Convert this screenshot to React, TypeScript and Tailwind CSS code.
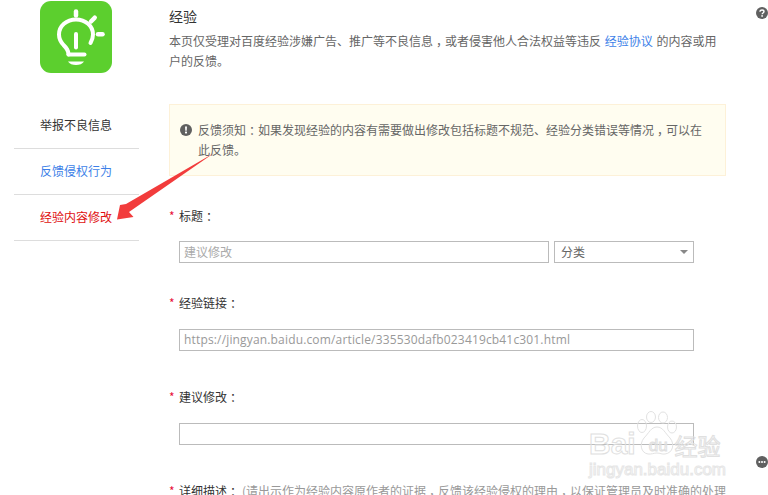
const font = "[font-family:'Noto_Sans_CJK_SC','Liberation_Sans',sans-serif]";

// full-width punctuation sits mid-cell in the reference, not at the left
function Punct({ char }: { char: string }) {
  return <span className="inline-block w-3 text-center [font-feature-settings:'halt']">{char}</span>;
}

function BulbLogo() {
  return (
    <div className="ml-[26px] mt-px h-[72px] w-[72px] rounded-[11px] bg-[#5ccf2e]">
      <svg width="72" height="72" viewBox="0 0 72 72" fill="none" stroke="#fff" strokeLinecap="round">
        <path d="M36 10.500v4" strokeWidth="4.500" />
        <path d="M51 20.500l3.700-3.800" strokeWidth="4.500" />
        <path d="M58 33.300h4.500" strokeWidth="4.500" />
        <path d="M36 33v13.500" strokeWidth="4" />
        <path
          d="M28.500 53.500c0-4.500-2-6.500-5-9.500-2.800-3-4.500-6.500-4.500-10.500 0-8.500 7.500-15 17-15s17 6.500 17 15c0 3-.8 5.500-2.500 8.500"
          strokeWidth="4"
        />
        <path d="M28.500 53.500h16" strokeWidth="4" />
        <path d="M28 60.500h16c-1.500 2.500-4.500 3.500-8 3.500s-6.500-1-8-3.500z" fill="#fff" stroke="none" />
      </svg>
    </div>
  );
}

function Sidebar() {
  const items = [
    { label: '举报不良信息', color: 'text-[#333333]' },
    { label: '反馈侵权行为', color: 'text-[#3d7fe8]' },
    { label: '经验内容修改', color: 'text-[#e01010]' },
  ];
  return (
    <aside className="ml-[14px] w-[125px] shrink-0">
      <BulbLogo />
      <ul className="mt-[30px]">
        {items.map((item) => (
          <li
            key={item.label}
            className={`flex h-[46px] items-center border-b border-[#dddddd] pb-[2px] pl-[26px] text-[12px] ${item.color}`}
          >
            {item.label}
          </li>
        ))}
      </ul>
    </aside>
  );
}

function FieldLabel({ text, hint, className }: { text: string; hint?: string; className: string }) {
  return (
    <div className={`flex h-5 items-center whitespace-nowrap text-[12px] text-[#333333] ${className}`}>
      <span className="w-[10px] text-[#e8103a]">*</span>
      <span>{text}<Punct char="：" /></span>
      {hint && (
        <span className="ml-[3px] text-[#999999]">
          (请出示作为经验内容原作者的证据<Punct char="，" />反馈该经验侵权的理由<Punct char="，" />{hint}
        </span>
      )}
    </div>
  );
}

function Notice() {
  return (
    <div className="mt-[33px] flex h-[72px] border border-[#fdf1d8] bg-[#fffdf0] pl-[10px] pr-[13px] pt-[15px] text-[12px] leading-5 text-[#666666]">
      <svg className="mt-1 h-3 w-3 shrink-0" viewBox="0 0 12 12">
        <circle cx="6" cy="6" r="6" fill="#606060" />
        <path d="M5 2.500h2l-.3 4.200H5.300z" fill="#fff" />
        <rect x="5" y="7.600" width="2" height="1.800" fill="#fff" />
      </svg>
      <p className="ml-[6px]">
        反馈须知<Punct char="：" />如果发现经验的内容有需要做出修改包括标题不规范、经验分类错误等情况<Punct char="，" />可以在此反馈。
      </p>
    </div>
  );
}

function Form() {
  return (
    <form>
      <FieldLabel text="标题" className="mt-[30px]" />
      <div className="ml-[10px] mt-[15px] flex gap-[5px]">
        <div className="flex h-[22px] w-[370px] items-center border border-[#bbbbbb] px-1 text-[12px] text-[#aaaaaa]">建议修改</div>
        <div className="flex h-[22px] w-[140px] items-center justify-between border border-[#bbbbbb] pl-[6px] pr-[4px] text-[12px] text-[#666666]">
          <span>分类</span>
          <span className="mr-px h-0 w-0 border-x-[4px] border-t-[4px] border-x-transparent border-t-[#888888]" />
        </div>
      </div>
      <FieldLabel text="经验链接" className="mt-[30px]" />
      <div className="ml-[10px] mt-4 flex h-[22px] w-[515px] items-center border border-[#bbbbbb] px-1 text-[12px] tracking-[0.16px] text-[#999999] [font-family:'Open_Sans',sans-serif]">
        https://jingyan.baidu.com/article/335530dafb023419cb41c301.html
      </div>
      <FieldLabel text="建议修改" className="mt-9" />
      <div className="ml-[10px] mt-4 h-[22px] w-[515px] border border-[#bbbbbb]" />
      <FieldLabel text="详细描述" hint="以保证管理员及时准确的处理" className="mt-9" />
    </form>
  );
}

function Arrow() {
  return (
    <svg className="pointer-events-none absolute left-0 top-0" width="768" height="495" fill="none">
      <path d="M214 153L126 204 120 205 117 219.500 133.500 217 129 212z" fill="#f23c3c" />
    </svg>
  );
}

function Watermark() {
  return (
    <div className="pointer-events-none absolute left-[589px] top-[410px] h-[70px] w-[140px]">
      <svg className="absolute left-[46px] top-[1px]" width="44" height="48" viewBox="0 0 44 48" fill="none" stroke="#e2e2e2">
        <ellipse cx="7" cy="15" rx="4.500" ry="6.500" />
        <ellipse cx="16" cy="6" rx="4.500" ry="5.500" />
        <ellipse cx="28" cy="6.500" rx="4.500" ry="5.500" />
        <ellipse cx="37" cy="16" rx="4.500" ry="6" />
        <path d="M22 16c6 0 8 6 13 11 5 6 3 15-5 16-3 .5-5-1-8-1s-6 1.500-9 1c-7-1-9-10-4-16 5-5 7-11 13-11z" />
      </svg>
      <div className="absolute left-0 top-[18px] flex items-start whitespace-nowrap font-bold text-transparent [-webkit-text-stroke:1px_#e0e0e0] [font-family:'Liberation_Sans',sans-serif]">
        <span className="text-[30px] leading-8">Bai</span>
        <span className="ml-[13px] mt-[8px] text-[17px] font-normal leading-5">du</span>
        <span className="ml-[7px] mt-[3px] text-[23px] font-normal leading-7 [font-family:'Noto_Sans_CJK_SC',sans-serif]">经验</span>
      </div>
      <div className="absolute left-0 top-[50px] whitespace-nowrap text-[17px] font-normal leading-5 text-transparent [-webkit-text-stroke:1px_#e6e6e6] [font-family:'Liberation_Sans',sans-serif]">
        jingyan.baidu.com
      </div>
    </div>
  );
}

export default function App() {
  return (
    <div className={`relative flex h-[495px] w-[768px] overflow-hidden bg-white ${font}`}>
      <Sidebar />
      <main className="ml-[30px] w-[557px] shrink-0 pt-[6px]">
        <h1 className="text-[14px] leading-5 text-[#333333]">经验</h1>
        <p className="mt-[5px] text-[12px] leading-5 text-[#666666]">
          本页仅受理对百度经验涉嫌广告、推广等不良信息<Punct char="，" />或者侵害他人合法权益等违反 <span className="mx-px text-[#3d7fe8]">经验协议</span> 的内容或用户的反馈。
        </p>
        <Notice />
        <Form />
      </main>
      <Arrow />
      <Watermark />
      <svg className="absolute left-[756px] top-[7px] h-3 w-3" viewBox="0 0 12 12">
        <circle cx="6" cy="6" r="6" fill="#606060" />
        <path d="M4 4.700c0-1.200 1-1.700 2-1.700s2 .6 2 1.600c0 1.400-1.800 1.300-1.800 2.600" fill="none" stroke="#fff" strokeWidth="1.400" />
        <rect x="5.300" y="8.200" width="1.600" height="1.500" fill="#fff" />
      </svg>
      <svg className="absolute left-[756px] top-[456px] h-3 w-3" viewBox="0 0 12 12">
        <circle cx="6" cy="6" r="6" fill="#606060" />
        <circle cx="3.400" cy="6" r="1" fill="#fff" />
        <circle cx="6" cy="6" r="1" fill="#fff" />
        <circle cx="8.600" cy="6" r="1" fill="#fff" />
      </svg>
    </div>
  );
}
